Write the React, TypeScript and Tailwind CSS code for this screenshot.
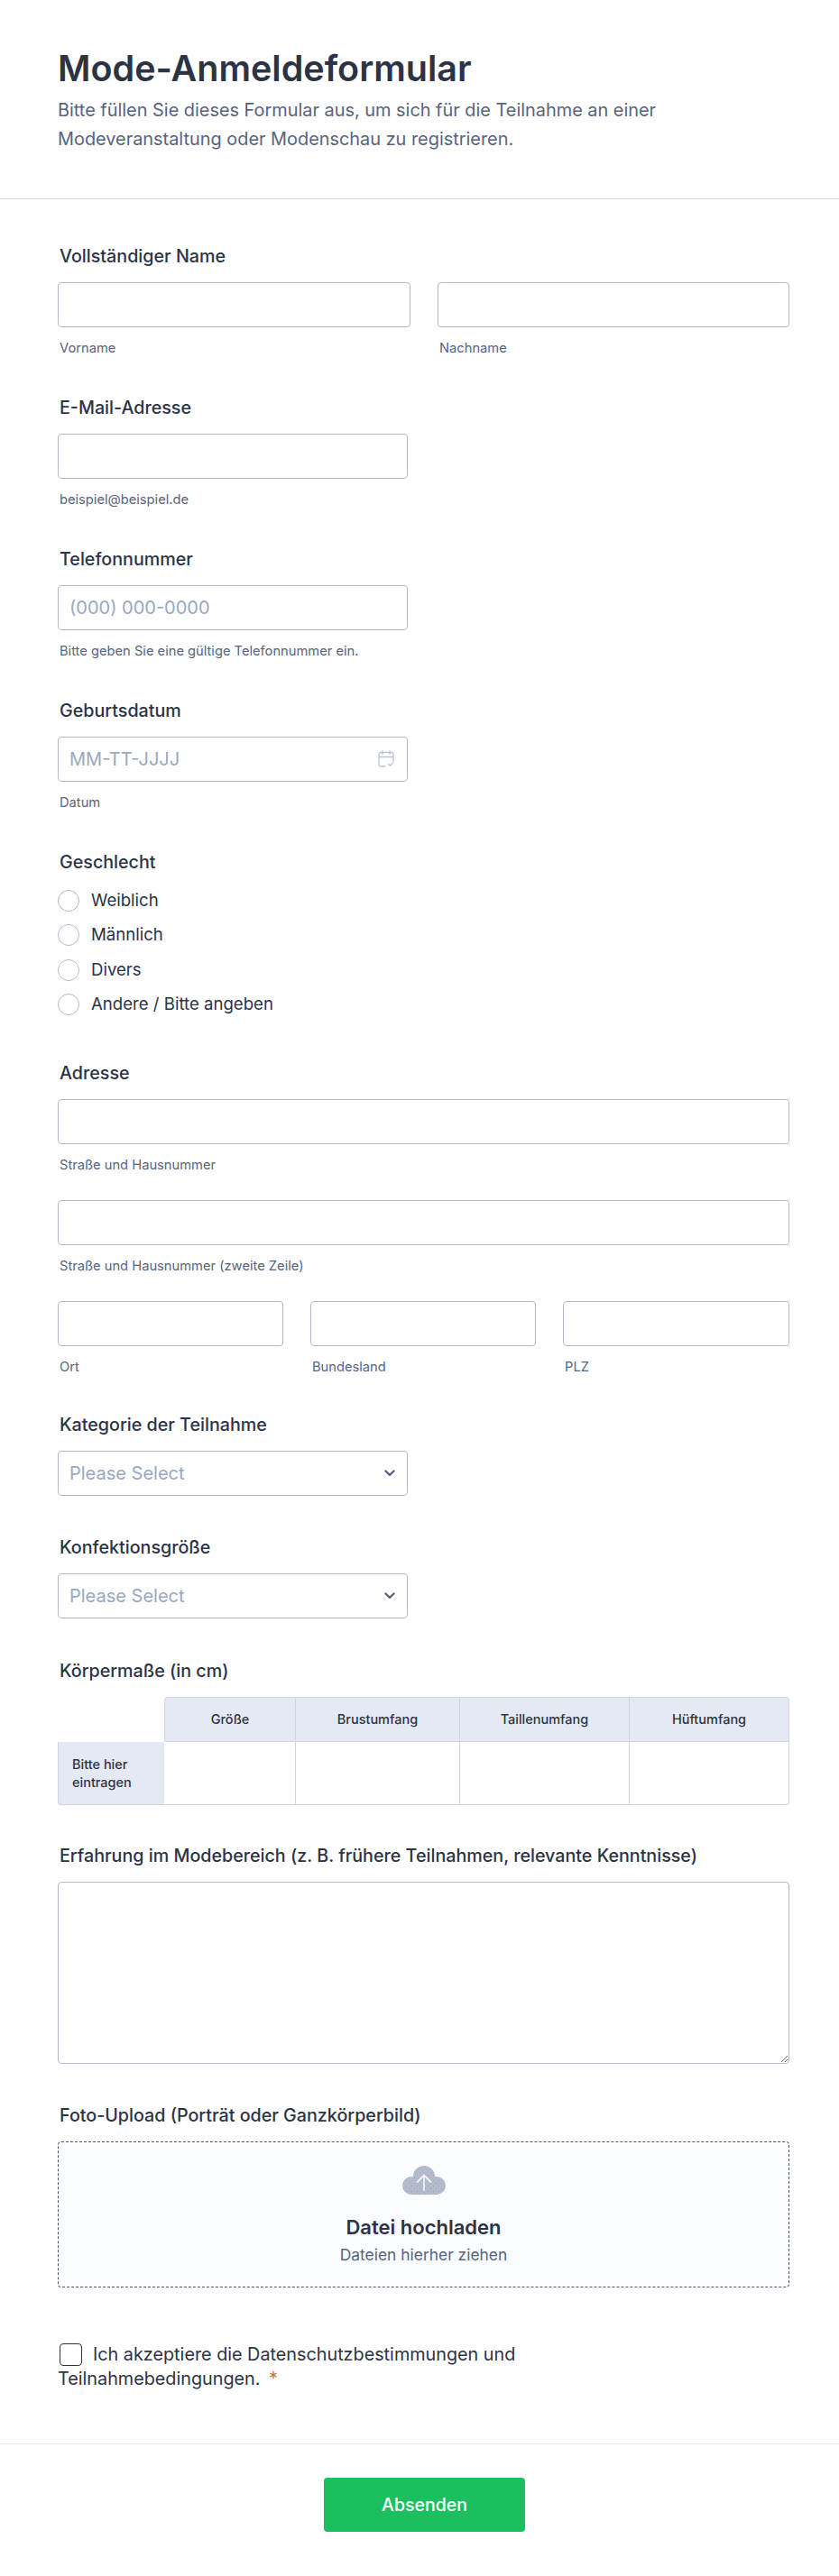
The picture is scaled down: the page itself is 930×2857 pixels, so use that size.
import { ReactNode } from 'react';

const inputClass =
    'h-[50px] w-full rounded-[4px] border border-[#b3b8c8] bg-white px-3 text-[20px] text-[#2c3345] placeholder:text-[#9aa8bd] outline-none';

function Label({ children }: { children: ReactNode }) {
    return <div className="mb-[17px] h-[24px] pl-[2px] text-[19.700px] leading-[24px] font-medium whitespace-nowrap text-[#2c3345]">{children}</div>;
}

function Sub({ children }: { children: ReactNode }) {
    return <div className="mt-[13px] h-[20px] pl-[2px] text-[14.7px] leading-[20px] text-[#57647e]">{children}</div>;
}

function Field({ sub, className }: { sub: string; className?: string }) {
    return (
        <div className={className}>
            <input type="text" className={inputClass} />
            <Sub>{sub}</Sub>
        </div>
    );
}

function CalendarIcon() {
    return (
        <svg viewBox="0 0 18 19" className="h-[19px] w-[18px] text-[#bcc4d4]" fill="none" stroke="currentColor" strokeWidth="1.3" strokeLinecap="round" strokeLinejoin="round">
            <path d="M8 18H3a2 2 0 0 1-2-2V4.500a2 2 0 0 1 2-2h12a2 2 0 0 1 2 2V12" />
            <path d="M1 7.500h16M5 .8v3.500M13 .8v3.500" />
            <path d="M11.500 15.500l1.800 1.800 3.400-3.400" />
        </svg>
    );
}

function Chevron() {
    return (
        <svg viewBox="0 0 12 8" className="pointer-events-none absolute top-[21px] right-[14px] h-[8px] w-[12px] text-[#57647e]" fill="none" stroke="currentColor" strokeWidth="2.4" strokeLinecap="round" strokeLinejoin="round">
            <path d="M1.500 1.500L6 6l4.500-4.500" />
        </svg>
    );
}

function CloudShape({ fill }: { fill: string }) {
    return (
        <g fill={fill}>
            <circle cx="24" cy="12" r="12" />
            <circle cx="10" cy="22" r="10" />
            <circle cx="38" cy="22" r="10" />
            <rect x="10" y="16" width="28" height="16" />
        </g>
    );
}

function CloudIcon() {
    return (
        <svg viewBox="0 0 48 32" className="h-[32px] w-[48px]">
            <defs>
                <pattern id="cloud-dots" width="6" height="6" patternUnits="userSpaceOnUse">
                    <circle cx="1.500" cy="1.500" r="0.500" fill="#7fa6dc" />
                    <circle cx="4.500" cy="4.500" r="0.500" fill="#7fa6dc" />
                </pattern>
            </defs>
            <CloudShape fill="#b4bccb" />
            <CloudShape fill="url(#cloud-dots)" />
            <path fill="none" stroke="#f1f3f8" strokeWidth="1.800" strokeLinecap="round" strokeLinejoin="round" d="M24 27V10.500M16.500 18l7.500-7.500 7.500 7.500" />
        </svg>
    );
}

function SelectField({ label, className }: { label: string; className: string }) {
    return (
        <div className={className}>
            <Label>{label}</Label>
            <div className="relative w-[388px]">
                <select className={`${inputClass} appearance-none text-[#9aa8bd]`} defaultValue="">
                    <option value="">Please Select</option>
                </select>
                <Chevron />
            </div>
        </div>
    );
}

const radios = ['Weiblich', 'Männlich', 'Divers', 'Andere / Bitte angeben'];
const columns = ['Größe', 'Brustumfang', 'Taillenumfang', 'Hüftumfang'];

export default function App() {
    return (
        <div className="min-h-[2857px] w-[930px] bg-white font-['Inter',sans-serif] text-[#2c3345]">
            {/* Header */}
            <div className="h-[221px] border-b border-[#d5d9e3] px-[64px] pt-[51px]">
                <h1 className="text-[39.500px] leading-[50px] font-semibold text-[#2c3345]">Mode-Anmeldeformular</h1>
                <p className="mt-[5px] w-[700px] text-[19.900px] leading-[32px] text-[#57647e]">
                    Bitte füllen Sie dieses Formular aus, um sich für die Teilnahme an einer Modeveranstaltung oder Modenschau zu registrieren.
                </p>
            </div>

            <div className="pt-[51px] pr-[55px] pl-[64px]">
                {/* Name */}
                <div className="mb-[44px]">
                    <Label>Vollständiger Name</Label>
                    <div className="flex gap-[30px]">
                        <Field sub="Vorname" className="w-[391px]" />
                        <Field sub="Nachname" className="w-[390px]" />
                    </div>
                </div>

                <div className="mb-[44px] w-[388px]">
                    <Label>E-Mail-Adresse</Label>
                    <Field sub="beispiel@beispiel.de" />
                </div>

                <div className="mb-[44px] w-[388px]">
                    <Label>Telefonnummer</Label>
                    <input type="text" placeholder="(000) 000-0000" className={inputClass} />
                    <Sub>Bitte geben Sie eine gültige Telefonnummer ein.</Sub>
                </div>

                <div className="mb-[44px] w-[388px]">
                    <Label>Geburtsdatum</Label>
                    <div className="relative">
                        <input type="text" placeholder="MM-TT-JJJJ" className={inputClass} />
                        <div className="absolute top-[15px] right-[15px]">
                            <CalendarIcon />
                        </div>
                    </div>
                    <Sub>Datum</Sub>
                </div>

                {/* Geschlecht */}
                <div className="mb-[52px]">
                    <Label>Geschlecht</Label>
                    <div className="mt-[19px] flex flex-col gap-[14.400px]">
                        {radios.map((radio) => (
                            <label key={radio} className="flex h-[24px] items-center gap-[13px] text-[18.600px] text-[#2c3345]">
                                <input type="radio" name="gender" className="h-[24px] w-[24px] appearance-none rounded-full border border-[#b3b8c8] bg-white" />
                                {radio}
                            </label>
                        ))}
                    </div>
                </div>

                {/* Adresse */}
                <div className="mb-[42px]">
                    <Label>Adresse</Label>
                    <Field sub="Straße und Hausnummer" className="mb-[29px]" />
                    <Field sub="Straße und Hausnummer (zweite Zeile)" className="mb-[29px]" />
                    <div className="grid grid-cols-[250px_250px_251px] gap-[30px]">
                        <Field sub="Ort" />
                        <Field sub="Bundesland" />
                        <Field sub="PLZ" />
                    </div>
                </div>

                <SelectField label="Kategorie der Teilnahme" className="mb-[45px]" />
                <SelectField label="Konfektionsgröße" className="mb-[46px]" />

                {/* Körpermaße */}
                <div className="mb-[44px]">
                    <Label>Körpermaße (in cm)</Label>
                    <div className="grid grid-cols-[118px_146px_182px_188px_177px] grid-rows-[50px_70px]">
                        <div />
                        {columns.map((col, i) => (
                            <div
                                key={col}
                                className={`flex items-center justify-center border-t border-r border-b border-[#d0d4df] bg-[#e5e9f4] text-[14.500px] font-medium text-[#2c3345] ${i === 0 ? 'rounded-tl-[4px] border-l' : ''} ${i === 3 ? 'rounded-tr-[4px]' : ''}`}
                            >
                                {col}
                            </div>
                        ))}
                        <div className="flex items-center rounded-bl-[4px] border-b border-l border-[#d0d4df] bg-[#e5e9f4] pl-[15px] text-[14.500px] leading-[20px] font-medium text-[#2c3345]">
                            Bitte hier
                            <br />
                            eintragen
                        </div>
                        {columns.map((col, i) => (
                            <div key={col} className={`border-r border-b border-l-0 border-[#d0d4df] bg-white ${i === 0 ? 'border-l' : ''} ${i === 3 ? 'rounded-br-[4px]' : ''}`} />
                        ))}
                    </div>
                </div>

                {/* Erfahrung */}
                <div className="mb-[45px]">
                    <Label>Erfahrung im Modebereich (z. B. frühere Teilnahmen, relevante Kenntnisse)</Label>
                    <textarea className="block h-[202px] w-full rounded-[4px] border border-[#b3b8c8] bg-white px-3 py-2 text-[18px] outline-none" />
                </div>

                {/* Upload */}
                <div className="mb-[61px]">
                    <Label>Foto-Upload (Porträt oder Ganzkörperbild)</Label>
                    <div className="flex h-[162px] flex-col items-center rounded-[4px] border border-dashed border-[#4f5668] bg-[#fbfcff] pt-[26px]">
                        <CloudIcon />
                        <div className="mt-[20px] text-[22px] leading-[32px] font-semibold text-[#2c3345]">Datei hochladen</div>
                        <div className="mt-[3px] text-[17.400px] leading-[24px] text-[#57647e]">Dateien hierher ziehen</div>
                    </div>
                </div>

                {/* Checkbox */}
                <div className="w-[530px] text-[19.800px] leading-[27px] text-[#2c3345]">
                    <input type="checkbox" className="mr-[12px] ml-[2px] inline-block h-[25px] w-[25px] appearance-none rounded-[4px] border-[1.5px] border-[#2c3345] bg-white align-[-6px]" />
                    Ich akzeptiere die Datenschutzbestimmungen und Teilnahmebedingungen. <span className="ml-[4px] text-[#c4764a]">*</span>
                </div>
            </div>

            {/* Footer */}
            <div className="mt-[58px] flex justify-center border-t border-[#e6e9f0] pt-[37px] pb-[40px]">
                <button type="button" className="ml-[11px] h-[60px] w-[223px] rounded-[4px] bg-[#1bbf5f] text-[19.500px] font-medium text-white">
                    Absenden
                </button>
            </div>
        </div>
    );
}
